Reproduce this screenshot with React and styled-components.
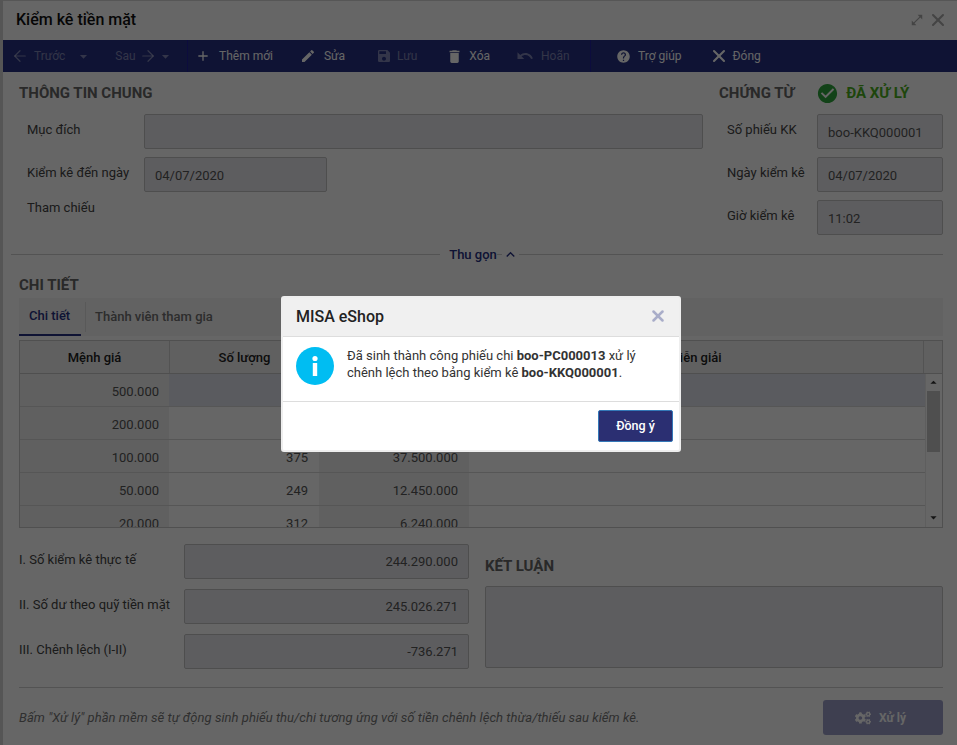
import styled, { createGlobalStyle } from "styled-components"
import {
  MdAdd,
  MdArrowDropDown,
  MdEdit,
  MdSave,
  MdDelete,
  MdUndo,
  MdHelp,
  MdCheckCircle,
  MdKeyboardArrowUp,
  MdArrowDropUp,
  MdOpenInFull,
} from "react-icons/md"
import { FaCogs } from "react-icons/fa"
import { ArrowLeft, ArrowRight, X } from "lucide-react"

const rows = [
  { price: "500.000", selected: true },
  { price: "200.000" },
  { price: "100.000", qty: "375", total: "37.500.000" },
  { price: "50.000", qty: "249", total: "12.450.000" },
  { price: "20.000", qty: "312", total: "6.240.000" },
]

const toolbarItems = [
  { icon: MdAdd, text: "Thêm mới", size: 16, before: 7, gap: 8 },
  { icon: MdEdit, text: "Sửa", size: 16, before: 27, gap: 8 },
  { icon: MdSave, text: "Lưu", size: 16, before: 31, gap: 5, off: true },
  { icon: MdDelete, text: "Xóa", size: 17, before: 29, gap: 6 },
  { icon: MdUndo, text: "Hoãn", size: 18, before: 26, gap: 7, off: true },
]

const GlobalStyle = createGlobalStyle`
  html, body {
    margin: 0;
    padding: 0;
    height: 745px;
    overflow: hidden;
    background: #d4d4d4;
    font-family: Roboto, "Liberation Sans", sans-serif;
    font-size: 13px;
    color: #333;
  }
  * { box-sizing: border-box; }
`

export default function App() {
  return (
    <>
      <GlobalStyle />
      <Window>
        <TitleBar>
          <WindowTitle>Kiểm kê tiền mặt</WindowTitle>
          <WindowActions>
            <MdOpenInFull size={14} />
            <X size={20} strokeWidth={2.5} />
          </WindowActions>
        </TitleBar>

        <Toolbar>
          <NavGroup>
            <NavItem $gap={5}>
              <ArrowLeft size={18} strokeWidth={1.6} />
              <span>Trước</span>
              <Caret $shift={5}><MdArrowDropDown size={17} /></Caret>
            </NavItem>
            <NavItem $gap={3}>
              <span>Sau</span>
              <ArrowRight size={18} strokeWidth={1.6} />
              <Caret $shift={-3}><MdArrowDropDown size={17} /></Caret>
            </NavItem>
          </NavGroup>
          <ActionGroup>
            {toolbarItems.map((item) => (
              <ToolButton key={item.text} $off={item.off} $before={item.before} $gap={item.gap}>
                <item.icon size={item.size} />
                <span>{item.text}</span>
              </ToolButton>
            ))}
          </ActionGroup>
          <HelpGroup>
            <ToolButton $before={25} $gap={7}>
              <MdHelp size={15} />
              <span>Trợ giúp</span>
            </ToolButton>
            <ToolButton $before={27} $gap={4}>
              <X size={20} strokeWidth={2.5} />
              <span>Đóng</span>
            </ToolButton>
          </HelpGroup>
        </Toolbar>

        <Content>
          <TopForm>
            <GeneralInfo>
              <SectionTitle>THÔNG TIN CHUNG</SectionTitle>
              <FieldRow>
                <FieldLabel>Mục đích</FieldLabel>
                <Input />
              </FieldRow>
              <FieldRow>
                <FieldLabel>Kiểm kê đến ngày</FieldLabel>
                <Input $width="183px">04/07/2020</Input>
              </FieldRow>
              <FieldRow $tight>
                <FieldLabel>Tham chiếu</FieldLabel>
              </FieldRow>
            </GeneralInfo>
            <Voucher>
              <VoucherHead>
                <SectionTitle>CHỨNG TỪ</SectionTitle>
                <Status>
                  <MdCheckCircle size={23} />
                  ĐÃ XỬ LÝ
                </Status>
              </VoucherHead>
              <VoucherRow>
                <FieldLabel>Số phiếu KK</FieldLabel>
                <Input>boo-KKQ000001</Input>
              </VoucherRow>
              <VoucherRow>
                <FieldLabel>Ngày kiểm kê</FieldLabel>
                <Input>04/07/2020</Input>
              </VoucherRow>
              <VoucherRow>
                <FieldLabel>Giờ kiểm kê</FieldLabel>
                <Input>11:02</Input>
              </VoucherRow>
            </Voucher>
          </TopForm>

          <Collapse>
            <span>Thu gọn</span>
            <MdKeyboardArrowUp size={17} />
          </Collapse>

          <DetailTitle>CHI TIẾT</DetailTitle>
          <Tabs>
            <Tab $active>Chi tiết</Tab>
            <Tab>Thành viên tham gia</Tab>
          </Tabs>

          <Table>
            <HeaderRow>
              <HeaderCell>Mệnh giá</HeaderCell>
              <HeaderCell>Số lượng</HeaderCell>
              <HeaderCell>Thành tiền</HeaderCell>
              <HeaderCell>Diễn giải</HeaderCell>
              <HeaderCell />
            </HeaderRow>
            <TableBody>
              <Rows>
                {rows.map((row) => (
                  <Row key={row.price}>
                    <Cell $shaded>{row.price}</Cell>
                    <Cell $selected={row.selected}>{row.qty}</Cell>
                    <Cell $shaded={!row.selected} $selected={row.selected}>{row.total}</Cell>
                    <Cell $selected={row.selected} />
                  </Row>
                ))}
              </Rows>
              <Scrollbar>
                <MdArrowDropUp size={15} />
                <Thumb />
                <MdArrowDropDown size={15} />
              </Scrollbar>
            </TableBody>
          </Table>

          <Summary>
            <Totals>
              <TotalRow>
                <FieldLabel>I. Số kiểm kê thực tế</FieldLabel>
                <Input $right>244.290.000</Input>
              </TotalRow>
              <TotalRow>
                <FieldLabel>II. Số dư theo quỹ tiền mặt</FieldLabel>
                <Input $right>245.026.271</Input>
              </TotalRow>
              <TotalRow>
                <FieldLabel>III. Chênh lệch (I-II)</FieldLabel>
                <Input $right>-736.271</Input>
              </TotalRow>
            </Totals>
            <Conclusion>
              <ConclusionTitle>KẾT LUẬN</ConclusionTitle>
              <TextArea />
            </Conclusion>
          </Summary>

          <Footer>
            <Hint>
              Bấm "Xử lý" phần mềm sẽ tự động sinh phiếu thu/chi tương ứng với số tiền chênh lệch thừa/thiếu sau kiểm kê.
            </Hint>
            <ProcessButton>
              <FaCogs size={16} />
              Xử lý
            </ProcessButton>
          </Footer>
        </Content>
      </Window>

      <Overlay />

      <Dialog>
        <DialogHead>
          <DialogTitle>MISA eShop</DialogTitle>
          <DialogClose><X size={18} strokeWidth={3.4} /></DialogClose>
        </DialogHead>
        <DialogBody>
          <InfoIcon viewBox="0 0 38 38">
            <circle cx="19" cy="19" r="19" fill="#00bdf2" />
            <circle cx="19" cy="11.5" r="2.6" fill="#fff" />
            <rect x="16.8" y="16" width="4.4" height="13" fill="#fff" />
          </InfoIcon>
          <Message>
            Đã sinh thành công phiếu chi <b>boo-PC000013</b> xử lý chênh lệch theo bảng kiểm kê <b>boo-KKQ000001</b>.
          </Message>
        </DialogBody>
        <DialogFoot>
          <ConfirmButton>Đồng ý</ConfirmButton>
        </DialogFoot>
      </Dialog>
    </>
  )
}

const Window = styled.div`
  margin-left: 3px;
  height: 745px;
  background: #fff;
  border-top: 1px solid #d8d8d8;
  display: flex;
  flex-direction: column;
`

const TitleBar = styled.div`
  height: 39px;
  flex: none;
  padding: 0 9px 2px 13px;
  display: flex;
  align-items: center;
  justify-content: space-between;
`

const WindowTitle = styled.div`
  font-size: 16px;
  font-weight: 500;
  color: #111;
`

const WindowActions = styled.div`
  display: flex;
  align-items: center;
  gap: 4px;
  color: #aaa;
`

const Toolbar = styled.div`
  height: 32px;
  flex: none;
  background: #263082;
  color: #fff;
  font-size: 12px;
  display: flex;
  align-items: stretch;
`

const NavGroup = styled.div`
  width: 185px;
  flex: none;
  display: flex;
  align-items: center;
  padding-left: 8px;
  gap: 23px;
  border-right: 1px solid #20209a;
`

const NavItem = styled.div`
  display: flex;
  align-items: center;
  gap: ${(props) => props.$gap}px;
  color: rgba(255, 255, 255, 0.42);
`

const Caret = styled.span`
  display: flex;
  margin-left: ${(props) => props.$shift}px;
`

const ActionGroup = styled.div`
  width: 403px;
  flex: none;
  display: flex;
  align-items: center;
  border-right: 1px solid #20209a;
`

const HelpGroup = styled.div`
  display: flex;
  align-items: center;
`

const ToolButton = styled.div`
  display: flex;
  align-items: center;
  margin-left: ${(props) => props.$before}px;
  gap: ${(props) => props.$gap}px;
  color: ${(props) => (props.$off ? "rgba(255, 255, 255, 0.42)" : "#fff")};
`

const Content = styled.div`
  flex: 1;
  padding: 0 14px 0 16px;
  display: flex;
  flex-direction: column;
`

const TopForm = styled.div`
  height: 172px;
  flex: none;
  display: flex;
  justify-content: space-between;
`

const GeneralInfo = styled.div`
  width: 684px;
`

const Voucher = styled.div`
  width: 224px;
`

const SectionTitle = styled.div`
  font-size: 15px;
  font-weight: 700;
  color: #666;
  height: 42px;
  line-height: 43px;
`

const FieldRow = styled.div`
  display: flex;
  margin-top: ${(props) => (props.$tight ? "-8px" : "0")};
  margin-bottom: 8px;
  padding-left: 8px;
  height: 35px;
`

const VoucherHead = styled.div`
  display: flex;
  align-items: flex-start;
  gap: 22px;
`

const Status = styled.div`
  display: flex;
  align-items: center;
  height: 42px;
  gap: 7px;
  font-size: 15px;
  font-weight: 700;
  color: #4caf1e;

  svg {
    color: #2fa53c;
  }
`

const VoucherRow = styled.div`
  display: grid;
  grid-template-columns: 90px 126px;
  padding-left: 8px;
  height: 35px;
  margin-bottom: 8px;
`

const FieldLabel = styled.div`
  flex: none;
  width: 117px;
  white-space: nowrap;
  padding-top: 8px;
  line-height: 16px;
  color: #444;
`

const Input = styled.div`
  flex: ${(props) => (props.$width ? "none" : 1)};
  width: ${(props) => props.$width || "auto"};
  height: 35px;
  background: #e9e9ee;
  border: 1px solid #c4c4c4;
  border-radius: 2px;
  padding: ${(props) => (props.$right ? "8px" : "9px")} 10px 0;
  line-height: 18px;
  color: #555;
  text-align: ${(props) => (props.$right ? "right" : "left")};
`

const Collapse = styled.div`
  height: 20px;
  flex: none;
  display: flex;
  align-items: center;
  justify-content: center;
  gap: 5px;
  margin-left: -8px;
  padding-left: 5px;
  font-weight: 500;
  color: #263082;
  background: linear-gradient(#cfcfcf, #cfcfcf) center / 100% 1px no-repeat;

  span {
    background: #fff;
    padding-left: 9px;
  }

  svg {
    background: #fff;
  }
`

const DetailTitle = styled.div`
  font-size: 15px;
  font-weight: 700;
  color: #666;
  height: 34px;
  padding-top: 10px;
  line-height: 22px;
`

const Tabs = styled.div`
  height: 38px;
  flex: none;
  background: #f5f5f5;
  display: flex;
  margin-bottom: 4px;
`

const Tab = styled.div`
  display: flex;
  align-items: center;
  font-weight: 500;
  padding: 0 0 2px 10px;
  margin-left: ${(props) => (props.$active ? "0" : "4px")};
  width: ${(props) => (props.$active ? "62px" : "auto")};
  height: 38px;
  color: ${(props) => (props.$active ? "#263082" : "#707070")};
  border-bottom: ${(props) => (props.$active ? "2px solid #263082" : "none")};
  position: relative;

  ${(props) =>
    !props.$active &&
    `
    &::before {
      content: "";
      position: absolute;
      left: 0;
      top: 4px;
      bottom: 4px;
      width: 1px;
      background: #dedede;
    }
  `}
`

const Table = styled.div`
  height: 188px;
  flex: none;
  border: 1px solid #c8c8c8;
  overflow: hidden;
`

const HeaderRow = styled.div`
  height: 33px;
  display: grid;
  grid-template-columns: 150px 150px 150px 1fr 18px;
  background: #f0f0f0;
  border-bottom: 1px solid #c6c6c6;
`

const HeaderCell = styled.div`
  display: flex;
  align-items: center;
  justify-content: center;
  font-weight: 500;
  color: #222;
  border-right: 1px solid #d0d0d0;

  &:last-child {
    border-right: none;
  }
`

const TableBody = styled.div`
  display: flex;
  height: 153px;
`

const Rows = styled.div`
  flex: 1;
  overflow: hidden;
`

const Row = styled.div`
  height: 33px;
  display: grid;
  grid-template-columns: 149px 150px 150px 1fr;
  border-bottom: 1px solid #d6d6d6;
`

const Cell = styled.div`
  padding: 10px 11px 0 0;
  line-height: 16px;
  text-align: right;
  color: #555;
  background: ${(props) =>
    props.$selected ? "#e2e4ee" : props.$shaded ? "#f0f0f0" : "#fff"};

  &:first-child {
    padding-right: 10px;
  }
`

const Scrollbar = styled.div`
  width: 17px;
  flex: none;
  padding: 1px 2px 2px 0;
  display: flex;
  flex-direction: column;
  align-items: center;
  color: #333;
  background: #fff;
  border-left: 1px solid #ececec;
`

const Thumb = styled.div`
  width: 13px;
  height: 61px;
  flex: none;
  margin-top: 1px;
  background: #c6c6c6;
  margin-bottom: auto;
`

const Summary = styled.div`
  height: 160px;
  flex: none;
  display: flex;
  gap: 16px;
  padding-top: 16px;
  border-bottom: 1px solid #d0d0d0;
`

const Totals = styled.div`
  width: 450px;
  flex: none;
  display: flex;
  flex-direction: column;
  gap: 10px;
`

const TotalRow = styled.div`
  display: flex;
  height: 35px;

  ${FieldLabel} {
    width: 165px;
  }
`

const Conclusion = styled.div`
  flex: 1;
`

const ConclusionTitle = styled(SectionTitle)`
  padding-top: 3px;
  line-height: 39px;
`

const TextArea = styled.div`
  height: 82px;
  background: #e9e9ee;
  border: 1px solid #c4c4c4;
  border-radius: 2px;
`

const Footer = styled.div`
  display: flex;
  justify-content: space-between;
  align-items: center;
  padding-top: 12px;
`

const Hint = styled.div`
  font-style: italic;
  letter-spacing: 0.04px;
  color: #777;
`

const ProcessButton = styled.div`
  width: 120px;
  height: 35px;
  flex: none;
  display: flex;
  align-items: center;
  justify-content: center;
  gap: 8px;
  padding-right: 5px;
  border-radius: 3px;
  background: #9c9fc8;
  color: #fff;
  font-size: 12px;
  font-weight: 700;
`

const Overlay = styled.div`
  position: fixed;
  inset: 0;
  background: rgba(0, 0, 0, 0.6);
`

const Dialog = styled.div`
  position: fixed;
  left: 281px;
  top: 296px;
  width: 400px;
  height: 156px;
  background: #fff;
  border: 2px solid #eee;
  border-radius: 3px;
  display: flex;
  flex-direction: column;
`

const DialogHead = styled.div`
  height: 39px;
  flex: none;
  background: #f0f0f0;
  border-bottom: 1px solid #ddd;
  padding: 0 12px 2px 13px;
  display: flex;
  align-items: center;
  justify-content: space-between;
`

const DialogTitle = styled.div`
  font-size: 16px;
  font-weight: 500;
  color: #222;
`

const DialogClose = styled.div`
  display: flex;
  color: #a9adc9;
`

const DialogBody = styled.div`
  height: 65px;
  flex: none;
  border-bottom: 1px solid #ddd;
  padding: 10px 30px 0 13px;
  display: flex;
  gap: 13px;
`

const InfoIcon = styled.svg`
  width: 38px;
  height: 38px;
  flex: none;
`

const Message = styled.div`
  line-height: 17px;
  color: #333;

  b {
    font-weight: 700;
  }
`

const DialogFoot = styled.div`
  flex: 1;
  display: flex;
  justify-content: flex-end;
  align-items: center;
  padding: 0 6px 1px 0;
`

const ConfirmButton = styled.div`
  width: 75px;
  height: 32px;
  display: flex;
  align-items: center;
  justify-content: center;
  background: #2b2f72;
  border: 1px solid #3478b8;
  border-radius: 2px;
  color: #fff;
  font-size: 12.5px;
  font-weight: 500;
`
